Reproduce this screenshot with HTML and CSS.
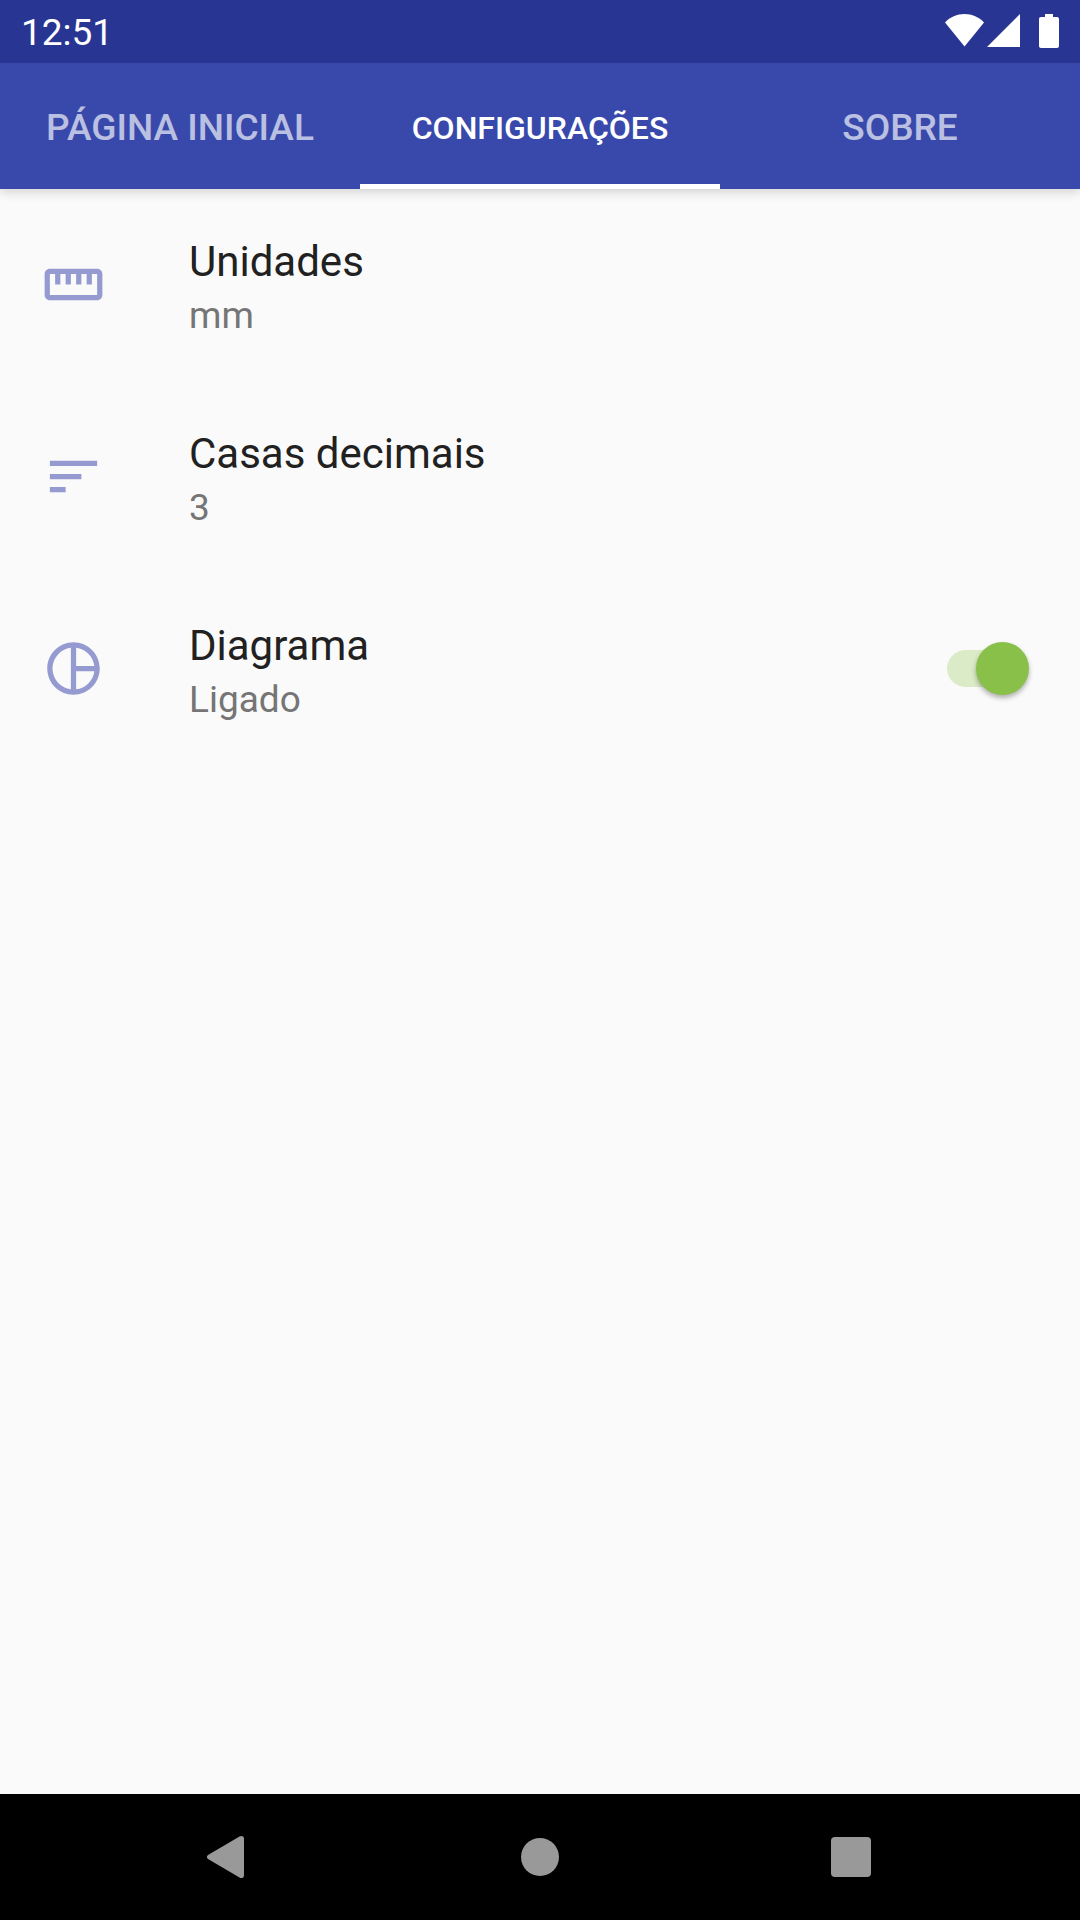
FILE: index.html
```
<!DOCTYPE html>
<html lang="pt">
<head>
  <meta charset="utf-8">
  <meta name="viewport" content="width=device-width, initial-scale=1">
  <title>Configurações</title>
  <link rel="stylesheet" href="styles.css">
</head>
<body>
  <div class="status-bar">
    <time class="clock">12:51</time>
    <svg class="status-icons" viewBox="0 0 116 36" aria-hidden="true">
      <path d="M0 9.500C5 4 12 1 19.500 1S34 4 39 9.500L19.500 33.500z"/>
      <path d="M75 1v33H42z"/>
      <path d="M100 1h8v3h4c1.200 0 2 .8 2 2v27c0 1.200-.8 2-2 2H96c-1.200 0-2-.8-2-2V6c0-1.200.8-2 2-2h4z"/>
    </svg>
  </div>

  <nav class="tabs">
    <a class="tab" href="#inicio">PÁGINA INICIAL</a>
    <a class="tab tab-active" href="#configuracoes" aria-current="page">CONFIGURAÇÕES</a>
    <a class="tab" href="#sobre">SOBRE</a>
  </nav>

  <main class="settings">
    <button class="setting" type="button">
      <svg class="setting-icon" viewBox="0 0 24 24" aria-hidden="true"><path d="M21 6H3c-1.100 0-2 .9-2 2v8c0 1.100.9 2 2 2h18c1.100 0 2-.9 2-2V8c0-1.100-.9-2-2-2zm0 10H3V8h2v4h2V8h2v4h2V8h2v4h2V8h2v4h2V8h2v8z"/></svg>
      <span class="setting-text">
        <span class="setting-title">Unidades</span>
        <span class="setting-value">mm</span>
      </span>
    </button>
    <button class="setting" type="button">
      <svg class="setting-icon" viewBox="0 0 24 24" aria-hidden="true"><path d="M3 18h6v-2H3v2zM3 6v2h18V6H3zm0 7h12v-2H3v2z"/></svg>
      <span class="setting-text">
        <span class="setting-title">Casas decimais</span>
        <span class="setting-value">3</span>
      </span>
    </button>
    <label class="setting" for="diagrama">
      <svg class="setting-icon" viewBox="0 0 24 24" aria-hidden="true"><path d="M12 2C6.480 2 2 6.480 2 12s4.480 10 10 10 10-4.480 10-10S17.520 2 12 2zm1 2.070c3.610.45 6.480 3.330 6.930 6.930H13V4.070zM4 12c0-4.060 3.070-7.440 7-7.930v15.870c-3.930-.5-7-3.880-7-7.940zm9 7.930V13h6.930c-.45 3.610-3.320 6.480-6.930 6.930z"/></svg>
      <span class="setting-text">
        <span class="setting-title">Diagrama</span>
        <span class="setting-value">Ligado</span>
      </span>
      <input class="switch" id="diagrama" type="checkbox" role="switch" checked>
    </label>
  </main>

  <div class="system-nav">
    <button class="nav-button" type="button" aria-label="Voltar">
      <svg class="nav-icon" viewBox="0 0 64 64" aria-hidden="true"><path d="M11 30 42.500 11.500C44.500 10.300 47 11 47 13.500v37c0 2.500-2.500 3.200-4.500 2L11 34c-1.500-1.300-1.500-2.700 0-4z"/></svg>
    </button>
    <button class="nav-button" type="button" aria-label="Início">
      <svg class="nav-icon" viewBox="0 0 64 64" aria-hidden="true"><circle cx="32" cy="32" r="19"/></svg>
    </button>
    <button class="nav-button" type="button" aria-label="Recentes">
      <svg class="nav-icon" viewBox="0 0 64 64" aria-hidden="true"><rect x="12" y="12" width="40" height="40" rx="4"/></svg>
    </button>
  </div>
</body>
</html>
```
FILE: styles.css
```
* {
  box-sizing: border-box;
}

body {
  display: flex;
  flex-direction: column;
  min-height: 100vh;
  margin: 0;
  background: #fafafa;
  font-family: Roboto, "Noto Sans", sans-serif;
}

button {
  margin: 0;
  border: 0;
  background: none;
  font: inherit;
}

.status-bar {
  z-index: 1;
  display: flex;
  align-items: center;
  justify-content: space-between;
  height: 63px;
  padding: 0 19px 0 21px;
  background: #283593;
  color: #fff;
}

.clock {
  padding-top: 3px;
  font-size: 37px;
  line-height: 44px;
}

.status-icons {
  width: 116px;
  height: 36px;
  margin-bottom: 2px;
  fill: #fff;
}

.tabs {
  display: grid;
  grid-template-columns: repeat(3, 1fr);
  height: 126px;
  background: #3949ab;
  box-shadow: 0 3px 10px rgba(0, 0, 0, 0.16);
}

.tab {
  display: flex;
  align-items: center;
  justify-content: center;
  padding-top: 3px;
  color: rgba(255, 255, 255, 0.67);
  font-size: 37px;
  font-weight: 500;
  line-height: 44px;
  text-decoration: none;
}

.tab-active {
  box-shadow: inset 0 -5px #fff;
  color: #fff;
  font-size: 32px;
}

.settings {
  flex: 1;
}

.setting {
  display: flex;
  align-items: center;
  width: 100%;
  height: 192px;
  padding: 0 51px 2px 42px;
  text-align: left;
}

.setting-icon {
  width: 63px;
  height: 63px;
  margin-right: 84px;
  fill: #959bd0;
}

.setting-text {
  display: flex;
  flex: 1;
  flex-direction: column;
}

.setting-title {
  color: #212121;
  font-size: 42px;
  line-height: 64px;
}

.setting-value {
  color: #757575;
  font-size: 37px;
  line-height: 44px;
}

.switch {
  position: relative;
  width: 82px;
  height: 53px;
  margin: 0;
  appearance: none;
}

.switch::before {
  position: absolute;
  inset: 8px 8px 8px 0;
  border-radius: 20px;
  background: #dbebc8;
  content: "";
}

.switch::after {
  position: absolute;
  top: 0;
  right: 0;
  width: 53px;
  height: 53px;
  border-radius: 50%;
  background: #89c04a;
  box-shadow: 0 3px 5px rgba(0, 0, 0, 0.3);
  content: "";
}

.switch:not(:checked)::before {
  background: #cfcfcf;
}

.switch:not(:checked)::after {
  right: 29px;
  background: #f1f1f1;
}

.system-nav {
  display: grid;
  grid-template-columns: repeat(3, 1fr);
  height: 126px;
  padding: 0 74px;
  background: #000;
}

.nav-button {
  display: flex;
  align-items: center;
  justify-content: center;
  padding: 0;
}

.nav-icon {
  width: 64px;
  height: 64px;
  fill: #999;
}
```
